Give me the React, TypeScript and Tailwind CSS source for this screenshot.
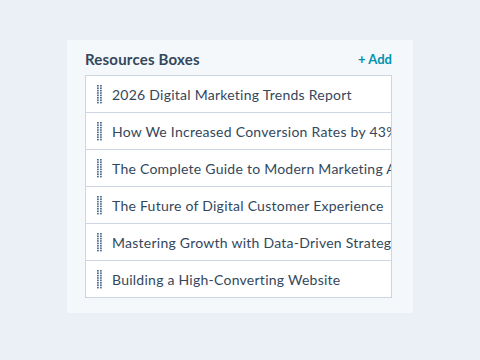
import React from 'react';

const resources = [
  '2026 Digital Marketing Trends Report',
  'How We Increased Conversion Rates by 43% in 90 Days',
  'The Complete Guide to Modern Marketing Automation',
  'The Future of Digital Customer Experience',
  'Mastering Growth with Data-Driven Strategies',
  'Building a High-Converting Website',
];

const DragHandle = () => (
  <svg width="5" height="19" viewBox="0 0 5 19" className="shrink-0">
    {Array.from({ length: 8 }).map((_, r) =>
      [0, 3].map((x) => (
        <rect key={`${r}-${x}`} x={x} y={r * 2.4} width="1.8" height="1.6" fill="#516f90" />
      ))
    )}
  </svg>
);

export default function App() {
  return (
    <div
      className="w-[480px] h-[360px] bg-[#eaf0f6] pt-[40px] pl-[67px]"
      style={{ fontFamily: 'Lato, "Liberation Sans", sans-serif' }}
    >
      <div className="w-[346px] h-[273px] bg-[#f5f8fa] pt-[10px] pl-[18px] pr-[21px]">
        <div className="flex items-center justify-between h-[18px] mb-[7px]">
          <span className="text-[15px] font-bold text-[#33475b] tracking-[0.2px]">Resources Boxes</span>
          <span className="text-[13px] font-bold text-[#0091ae] mt-[1px]">+ Add</span>
        </div>
        <div className="flex flex-col">
          {resources.map((title, i) => (
            <div
              key={i}
              className={`flex items-center gap-[10px] h-[38px] bg-white border border-[#cbd6e2] pl-[11px] overflow-hidden ${i > 0 ? '-mt-px' : ''}`}
            >
              <DragHandle />
              <span className="text-[14px] text-[#33475b] tracking-[0.25px] whitespace-nowrap overflow-hidden">{title}</span>
            </div>
          ))}
        </div>
      </div>
    </div>
  );
}
